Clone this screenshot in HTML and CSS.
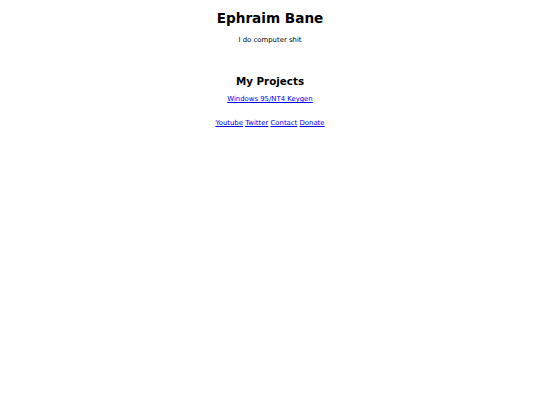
FILE: index.html
```html
<!DOCTYPE html>
<html>
<head>
<meta charset="utf-8">
<title>Ephraim Bane</title>
<link rel="stylesheet" href="styles.css">
</head>
<body>
<div class="page">
  <h1 class="title">Ephraim Bane</h1>
  <p class="tagline">I do computer shit</p>
  <h2 class="section">My Projects</h2>
  <p class="projects"><a href="#">Windows 95/NT4 Keygen</a></p>
  <p class="links"><a href="#">Youtube</a> <a href="#">Twitter</a> <a href="#">Contact</a> <a href="#">Donate</a></p>
</div>
</body>
</html>
```
FILE: styles.css
```css
html, body {
  background: #ffffff;
}
body {
  margin: 0;
  font-family: "DejaVu Sans", sans-serif;
  font-size: 6.9px;
  color: #000;
}
.page {
  text-align: center;
  padding-top: 9.5px;
}
.title {
  font-size: 13.6px;
  line-height: 16px;
  font-weight: bold;
  margin: 0;
}
.tagline {
  line-height: 8px;
  margin: 10px 0 0;
}
.section {
  font-size: 10.35px;
  line-height: 12px;
  font-weight: bold;
  margin: 31px 0 0;
}
.projects {
  line-height: 8px;
  margin: 8.5px 0 0;
}
.links {
  line-height: 8px;
  margin: 15.5px 0 0;
}
a {
  color: #0000ee;
}
```
